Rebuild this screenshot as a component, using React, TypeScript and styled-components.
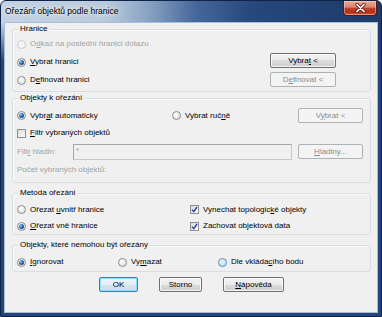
import React from 'react';
import styled, { createGlobalStyle, css } from 'styled-components';

const Global = createGlobalStyle`
  html, body { margin: 0; padding: 0; background: #ffffff; }
  body {
    width: 382px;
    height: 317px;
    overflow: hidden;
    font-family: "Liberation Sans", Arial, sans-serif;
  }
  #root { width: 382px; height: 317px; }
`;

const Window = styled.div`
  box-sizing: border-box;
  width: 382px;
  height: 317px;
  border: 1px solid #0f2448;
  border-radius: 6px 6px 0 0;
  background:
    linear-gradient(to bottom, rgba(35, 69, 120, 0) 22px, rgba(35, 69, 120, 1) 60px),
    linear-gradient(to right, #c4d3e3 0, #b9cadd 105px, #8ba5c5 145px, #45679a 195px, #26487c 250px, #1d3a68 100%);
  display: flex;
  flex-direction: column;
  overflow: hidden;
`;

const TitleBar = styled.div`
  height: 21px;
  flex: none;
  display: flex;
  align-items: flex-start;
  padding-left: 4px;
`;

const Title = styled.div`
  margin-top: 5px;
  font-size: 8.5px;
  line-height: 10px;
  color: #000;
  white-space: nowrap;
  text-shadow: 0 0 4px rgba(255, 255, 255, 0.95), 0 0 8px rgba(255, 255, 255, 0.8);
`;

const CloseButton = styled.div`
  box-sizing: border-box;
  margin-left: auto;
  margin-right: 4px;
  width: 34px;
  height: 15px;
  border: 1px solid #4b1e1a;
  border-top: none;
  border-radius: 0 0 4px 4px;
  background: linear-gradient(to bottom, #e8ad98 0%, #d9826a 45%, #c4422a 50%, #b2301a 80%, #cc5e40 100%);
  box-shadow: inset 0 0 0 1px rgba(255, 220, 200, 0.45);
  display: flex;
  align-items: center;
  justify-content: center;
`;

const Client = styled.div`
  flex: 1;
  margin: 0 3px 3px 3px;
  border: 1px solid #a9bfd9;
  background: #f0f0f0;
  padding: 6px 6px 0 7px;
  display: flex;
  flex-direction: column;
  font-size: 8px;
  line-height: 10px;
  color: #000;
`;

const Group = styled.div<{ $mt: number; $pr: number; $pb: number }>`
  box-sizing: border-box;
  border: 1px solid #d5dfe5;
  border-radius: 3px;
  margin-top: ${p => p.$mt}px;
  padding: 0 ${p => p.$pr}px ${p => p.$pb}px 4px;
  display: flex;
  flex-direction: column;
  box-shadow: inset 1px 1px 0 #fbfbfb;
`;

const Legend = styled.div`
  align-self: flex-start;
  margin: -6px 0 0 1px;
  padding: 0 2px;
  height: 10px;
  line-height: 10px;
  background: #f0f0f0;
  white-space: nowrap;
`;

const Grid = styled.div<{ $cols: string; $rows: string; $mt?: number; $gap?: number }>`
  display: grid;
  grid-template-columns: ${p => p.$cols};
  grid-template-rows: ${p => p.$rows};
  column-gap: ${p => p.$gap ?? 0}px;
  margin-top: ${p => p.$mt ?? 0}px;
  align-items: center;
`;

const ButtonStack = styled.div`
  grid-column: 2;
  grid-row: 2 / 4;
  align-self: start;
  display: flex;
  flex-direction: column;
  gap: 4px;
`;

const Option = styled.label<{ $disabled?: boolean }>`
  display: flex;
  align-items: center;
  gap: 4px;
  white-space: nowrap;
  color: ${p => (p.$disabled ? '#a3a3a3' : '#000')};
`;

const PlainText = styled.div<{ $disabled?: boolean }>`
  white-space: nowrap;
  color: ${p => (p.$disabled ? '#a3a3a3' : '#000')};
`;

const RadioMark = styled.span<{ $checked?: boolean; $disabled?: boolean; $hot?: boolean }>`
  box-sizing: border-box;
  flex: none;
  width: 9px;
  height: 9px;
  border-radius: 50%;
  border: 1px solid ${p => (p.$disabled ? '#cacaca' : p.$hot ? '#4f92c8' : '#8a8d91')};
  background: ${p =>
    p.$disabled
      ? '#f5f5f5'
      : p.$hot
      ? 'radial-gradient(circle at 40% 35%, #eaf7fe 0%, #aed9f4 100%)'
      : 'radial-gradient(circle at 40% 35%, #ffffff 0%, #d6d6d6 100%)'};
  display: flex;
  align-items: center;
  justify-content: center;
  &::after {
    content: '';
    display: ${p => (p.$checked ? 'block' : 'none')};
    width: 5px;
    height: 5px;
    border-radius: 50%;
    background: radial-gradient(circle at 35% 35%, #8fcdf5 0%, #1f5fa8 50%, #0c3468 100%);
  }
`;

const CheckMark = styled.span`
  box-sizing: border-box;
  flex: none;
  width: 9px;
  height: 9px;
  border: 1px solid #8e8f8f;
  background: linear-gradient(135deg, #dadada 0%, #fbfbfb 100%);
  display: flex;
  align-items: center;
  justify-content: center;
`;

const Btn = styled.button<{ $w: number; $default?: boolean }>`
  box-sizing: border-box;
  width: ${p => p.$w}px;
  height: 15px;
  margin: 0;
  padding: 0;
  font: 8px/10px "Liberation Sans", Arial, sans-serif;
  color: #000;
  border-radius: 2px;
  border: 1px solid #707070;
  background: linear-gradient(to bottom, #f3f3f3 0%, #ebebeb 50%, #dcdcdc 50%, #cfcfcf 100%);
  box-shadow: inset 0 0 0 1px rgba(255, 255, 255, 0.75);
  white-space: nowrap;
  ${p =>
    p.$default &&
    css`
      border-color: #3c7fb1;
      background: linear-gradient(to bottom, #eef5f9 0%, #e3eef5 50%, #d4e4ee 50%, #cbdde9 100%);
      box-shadow: inset 0 0 0 1px #8fdcf7;
    `}
  &:disabled {
    color: #8a8a8a;
    border-color: #adb2b5;
    background: #f4f4f4;
    box-shadow: none;
  }
`;

const TextBox = styled.input`
  box-sizing: border-box;
  width: 100%;
  height: 16px;
  margin: 0;
  padding: 0 2px 3px;
  border: 1px solid #a6a6a6;
  border-right-color: #c8c8c8;
  border-bottom-color: #c8c8c8;
  background: #f0f0f0;
  font: 8px/10px "Liberation Sans", Arial, sans-serif;
  color: #a3a3a3;
`;

const Row = styled.div<{ $h: number }>`
  height: ${p => p.$h}px;
  display: flex;
  align-items: center;
`;

const Footer = styled.div`
  margin-top: 5px;
  display: flex;
  justify-content: center;
  gap: 21px;
`;

const Radio: React.FC<{ checked?: boolean; disabled?: boolean; hot?: boolean; children: React.ReactNode }> = ({
  checked,
  disabled,
  hot,
  children,
}) => (
  <Option $disabled={disabled}>
    <RadioMark $checked={checked} $disabled={disabled} $hot={hot} />
    <span>{children}</span>
  </Option>
);

const Check: React.FC<{ checked?: boolean; children: React.ReactNode }> = ({ checked, children }) => (
  <Option>
    <CheckMark>
      {checked && (
        <svg width="7" height="7" viewBox="0 0 7 7">
          <path d="M1 3.6 L2.8 5.6 L6 1" fill="none" stroke="#25449a" strokeWidth="1.4" />
        </svg>
      )}
    </CheckMark>
    <span>{children}</span>
  </Option>
);

export default function App() {
  return (
    <>
      <Global />
      <Window>
        <TitleBar>
          <Title>Ořezání objektů podle hranice</Title>
          <CloseButton>
            <svg width="11" height="10" viewBox="0 0 11 10">
              <path d="M2 1.5 L9 8.5 M9 1.5 L2 8.5" stroke="#5a1d14" strokeWidth="3.2" strokeLinecap="round" />
              <path d="M2 1.5 L9 8.5 M9 1.5 L2 8.5" stroke="#ffffff" strokeWidth="1.7" strokeLinecap="round" />
            </svg>
          </CloseButton>
        </TitleBar>
        <Client>
          <Group $mt={0} $pr={34} $pb={2}>
            <Legend>Hranice</Legend>
            <Grid $cols="1fr 66px" $rows="18px 18px 18px" $mt={1}>
              <Radio disabled>
                O<u>d</u>kaz na poslední hranici dotazu
              </Radio>
              <span />
              <Radio checked>
                <u>V</u>ybrat hranici
              </Radio>
              <ButtonStack>
                <Btn $w={66}>
                  Vybra<u>t</u> &lt;
                </Btn>
                <Btn $w={66} disabled>
                  D<u>e</u>finovat &lt;
                </Btn>
              </ButtonStack>
              <Radio>
                D<u>e</u>finovat hranici
              </Radio>
            </Grid>
          </Group>

          <Group $mt={6} $pr={7} $pb={3}>
            <Legend>Objekty k ořezání</Legend>
            <Grid $cols="155px 1fr 65px" $rows="17px" $mt={4}>
              <Radio checked>
                Vybr<u>a</u>t automaticky
              </Radio>
              <Radio>
                Vybrat ruč<u>n</u>ě
              </Radio>
              <Btn $w={65} disabled>
                V<u>y</u>brat &lt;
              </Btn>
            </Grid>
            <Row $h={18}>
              <Check>
                <u>F</u>iltr vybraných objektů
              </Check>
            </Row>
            <Grid $cols="50px 1fr 65px" $rows="19px" $gap={6}>
              <PlainText $disabled>
                Filt<u>r</u> hladin:
              </PlainText>
              <TextBox disabled readOnly value="*" />
              <Btn $w={65} disabled>
                <u>H</u>ladiny...
              </Btn>
            </Grid>
            <Row $h={18}>
              <PlainText $disabled>Počet vybraných objektů:</PlainText>
            </Row>
          </Group>

          <Group $mt={10} $pr={7} $pb={0}>
            <Legend>Metoda ořezání</Legend>
            <Grid $cols="173px 1fr" $rows="17px 16px" $mt={3}>
              <Radio>
                Ořezat <u>u</u>vnitř hranice
              </Radio>
              <Check checked>
                Vynechat topologic<u>k</u>é objekty
              </Check>
              <Radio checked>
                <u>O</u>řezat vně hranice
              </Radio>
              <Check checked>
                Zachovat ob<u>j</u>ektová data
              </Check>
            </Grid>
          </Group>

          <Group $mt={10} $pr={7} $pb={1}>
            <Legend>Objekty, které nemohou být ořezány</Legend>
            <Grid $cols="101px 100px 1fr" $rows="16px" $mt={4}>
              <Radio checked>
                <u>I</u>gnorovat
              </Radio>
              <Radio>
                Vy<u>m</u>azat
              </Radio>
              <Radio hot>
                Dle vkláda<u>c</u>ího bodu
              </Radio>
            </Grid>
          </Group>

          <Footer>
            <Btn $w={39} $default>
              OK
            </Btn>
            <Btn $w={43}>Storno</Btn>
            <Btn $w={61}>
              <u>N</u>ápověda
            </Btn>
          </Footer>
        </Client>
      </Window>
    </>
  );
}
